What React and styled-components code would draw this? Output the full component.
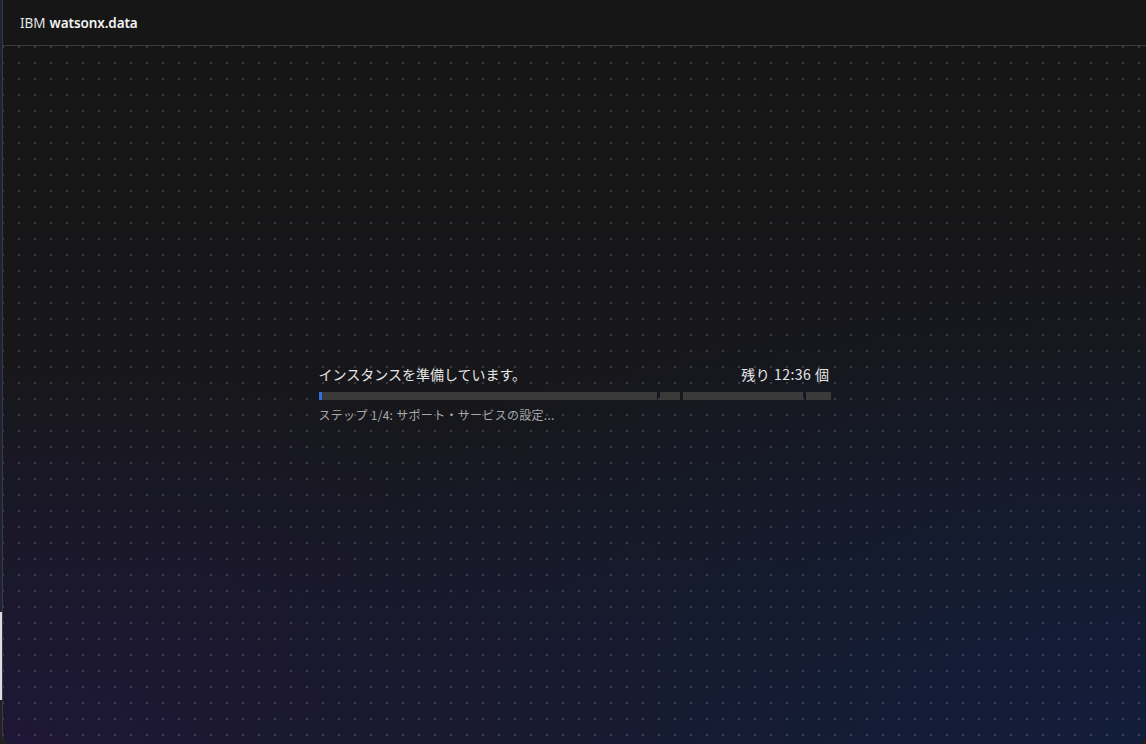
import React from "react";
import styled, { createGlobalStyle } from "styled-components";

const Global = createGlobalStyle`
  html, body { margin: 0; padding: 0; height: 100%; }
  body {
    background: linear-gradient(to bottom, #1b2335 0, #1b2335 612px, #d9dde5 612px, #d9dde5 700px, #222 700px);
    font-family: "Noto Sans", "Noto Sans CJK JP", sans-serif;
    overflow: hidden;
  }
  #root { height: 100%; }
`;

const Stage = styled.div`
  height: 744px;
  width: 1146px;
  padding-left: 2px;
  box-sizing: border-box;
  display: flex;
`;

const Window = styled.div`
  flex: 1;
  display: flex;
  flex-direction: column;
  border-left: 1px solid #3b3b3d;
  border-radius: 0 0 9px 9px;
  overflow: hidden;
  background-color: #161616;
`;

const Header = styled.header`
  height: 45px;
  flex: none;
  display: flex;
  align-items: center;
  padding-left: 17px;
  background: #161616;
  border-bottom: 1px solid #3a3a3a;
  font-family: "Noto Sans", sans-serif;
  font-size: 13.5px;
  color: #e4e4e4;
`;

const Brand = styled.span`
  font-weight: 400;
  margin-right: 4px;
`;

const Product = styled.span`
  font-weight: 600;
  color: #f2f2f2;
  letter-spacing: -0.1px;
`;

const Canvas = styled.main`
  flex: 1;
  display: flex;
  align-items: center;
  justify-content: center;
  background-color: #161617;
  background-image:
    linear-gradient(to right, transparent 0 15px, rgba(0, 0, 0, 0) 15px),
    radial-gradient(circle, rgba(130, 135, 150, 0.34) 1px, transparent 1.45px),
    radial-gradient(ellipse 70% 55% at 0% 100%, rgba(32, 22, 58, 0.75), transparent 100%),
    radial-gradient(ellipse 80% 70% at 100% 100%, rgba(18, 30, 62, 0.85), transparent 100%),
    linear-gradient(to bottom, #161616 0%, #17171a 45%, #161a28 100%);
  background-size: 16px 16px, 16px 16px, 100% 100%, 100% 100%, 100% 100%;
  background-position: 0 0, 8px -7px, 0 0, 0 0, 0 0;
`;

const Panel = styled.section`
  width: 512px;
  display: flex;
  flex-direction: column;
  margin-top: -3px;
`;

const TitleRow = styled.div`
  display: flex;
  justify-content: space-between;
  align-items: center;
  font-family: "Noto Sans CJK JP", "Noto Sans", sans-serif;
  font-size: 14px;
  line-height: 18px;
  color: #e6e6e6;
`;

const Remaining = styled.span`
  padding-right: 1px;
  letter-spacing: 0.5px;
`;

const Bar = styled.div`
  margin-top: 9px;
  height: 8px;
  display: flex;
  gap: 3px;
`;

const Segment = styled.div`
  flex: ${(p) => p.$grow};
  height: 100%;
  background: #3a3a3b;
  position: relative;
`;

const Fill = styled.div`
  position: absolute;
  left: 0;
  top: 0;
  bottom: 0;
  background: #2f6fe0;
`;

const Step = styled.div`
  margin-top: 7px;
  font-family: "Noto Sans CJK JP", "Noto Sans", sans-serif;
  font-size: 12px;
  line-height: 16px;
  letter-spacing: 0.3px;
  color: #a8a8a8;
`;

const segments = [338, 20, 120, 25];

export default function App() {
  return (
    <>
      <Global />
      <Stage>
        <Window>
          <Header>
            <Brand>IBM</Brand>
            <Product>watsonx.data</Product>
          </Header>
          <Canvas>
            <Panel>
              <TitleRow>
                <span>インスタンスを準備しています。</span>
                <Remaining>残り 12:36 個</Remaining>
              </TitleRow>
              <Bar>
                {segments.map((w, i) => (
                  <Segment key={i} $grow={w}>
                    {i === 0 && <Fill style={{ width: "3px" }} />}
                  </Segment>
                ))}
              </Bar>
              <Step>ステップ 1/4: サポート・サービスの設定...</Step>
            </Panel>
          </Canvas>
        </Window>
      </Stage>
    </>
  );
}
